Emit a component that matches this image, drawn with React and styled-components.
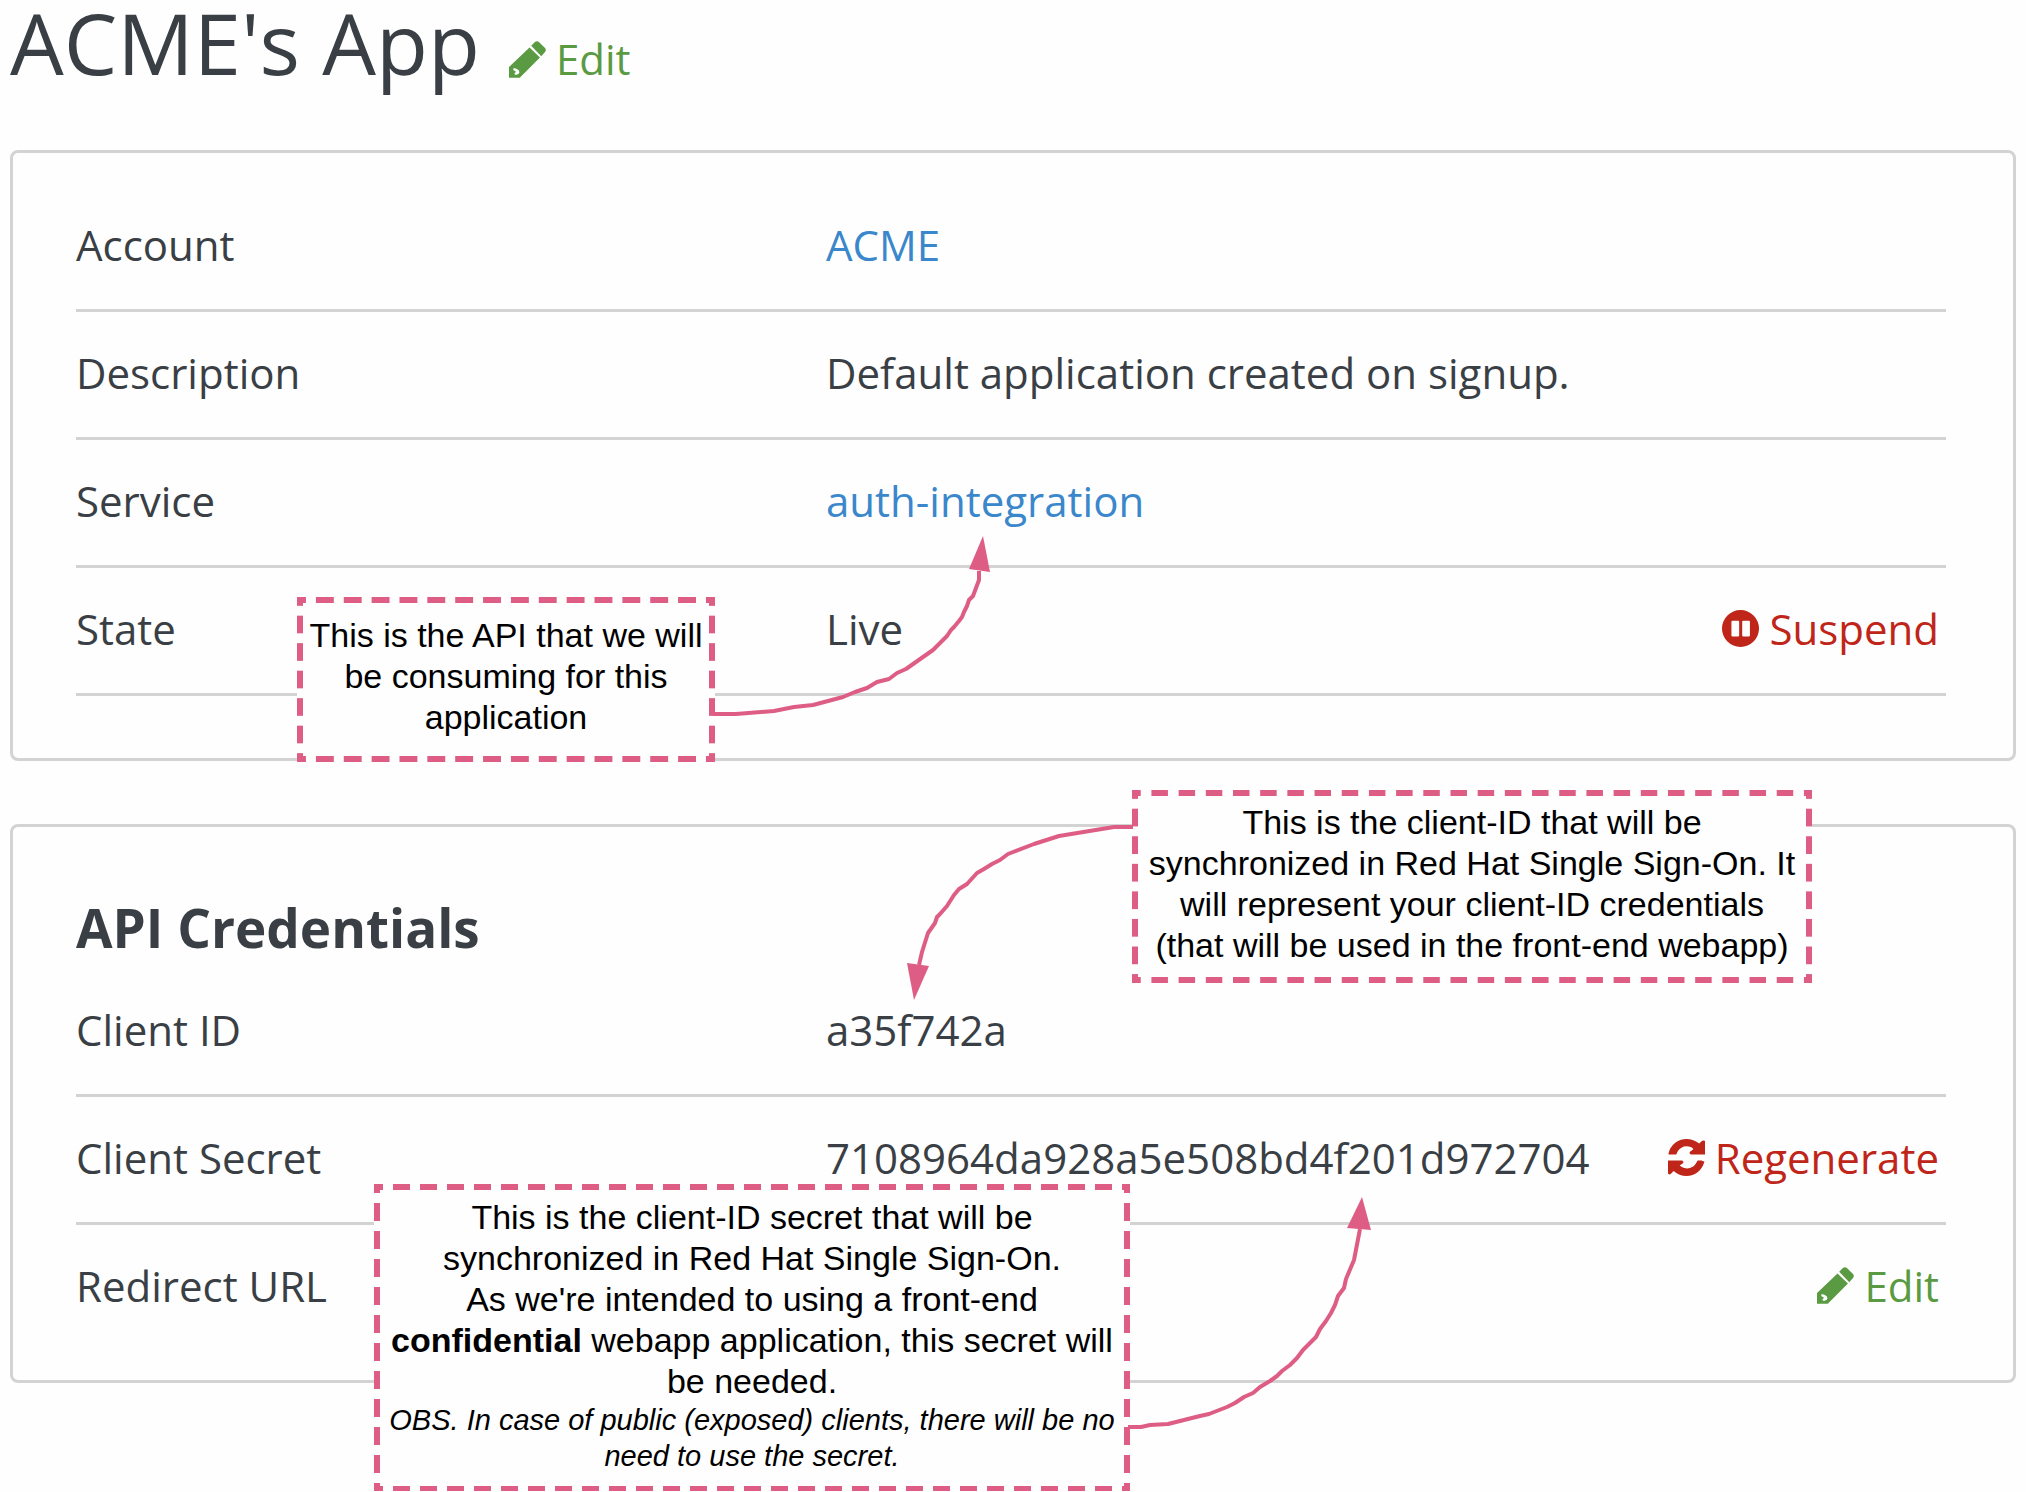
import React from "react";
import styled, { createGlobalStyle } from "styled-components";

const color = {
  text: "#393f44",
  link: "#3a87cb",
  edit: "#5a9a42",
  danger: "#bf2619",
  line: "#d3d3d3",
  note: "#de5d85",
};

const GlobalStyle = createGlobalStyle`
  *, *::before, *::after { box-sizing: border-box; }
  body {
    margin: 0;
    background: #fefefe;
    color: ${color.text};
    font-family: "Open Sans", "Noto Sans", sans-serif;
    font-size: 42px;
    line-height: 60px;
  }
`;

const Page = styled.main`
  position: relative;
  padding: 0 10px 108px;
`;

const Header = styled.header`
  display: flex;
  align-items: baseline;
  gap: 29px;
  margin-bottom: 61px;
`;

const Title = styled.h1`
  margin: 0;
  font-size: 85px;
  line-height: 84px;
  font-weight: 400;
`;

const Card = styled.section`
  border: 3px solid ${color.line};
  border-radius: 8px;
  padding: ${(p) => (p.$titled ? "69px 67px 27px 63px" : "31px 67px 62px 63px")};

  & + & {
    margin-top: 63px;
  }
`;

const CardTitle = styled.h2`
  margin: 0 0 9px;
  font-size: 53px;
  line-height: 64px;
  font-weight: 700;
`;

const Details = styled.dl`
  margin: 0;
`;

const Row = styled.div`
  display: grid;
  grid-template-columns: 40% 1fr auto;
  align-items: center;
  height: 128px;
  padding-bottom: 4px;
  border-bottom: 3px solid ${(p) => (p.$last ? "transparent" : color.line)};
`;

const Term = styled.dt`
  white-space: nowrap;
`;

const Value = styled.dd`
  margin: 0;
  padding-left: 2px;
  white-space: nowrap;
`;

const ActionCell = styled(Value)`
  padding-right: 7px;
`;

const Link = styled.a`
  color: ${color.link};
  text-decoration: none;
`;

const Action = styled.button`
  display: flex;
  align-items: center;
  gap: 10px;
  padding: 0;
  border: 0;
  background: none;
  color: ${(p) => (p.$danger ? color.danger : color.edit)};
  font: inherit;
  text-decoration: none;
  cursor: pointer;
`;

const ActionLabel = styled.span`
  align-self: baseline;
`;

const Icon = styled.svg`
  width: 37px;
  height: 37px;
  fill: currentColor;
`;

const Annotations = styled.aside`
  position: absolute;
  inset: 0;
  pointer-events: none;
`;

const Arrows = styled.svg`
  position: absolute;
  top: 0;
  left: 0;
  overflow: visible;

  polyline {
    fill: none;
    stroke: ${color.note};
    stroke-width: 4;
    stroke-linejoin: round;
  }

  polygon {
    fill: ${color.note};
  }
`;

const dashX = `linear-gradient(90deg, ${color.note} 9px, transparent 9px 19px, ${color.note} 19px)`;
const dashY = `linear-gradient(180deg, ${color.note} 9px, transparent 9px 19px, ${color.note} 19px)`;

const Note = styled.p`
  position: absolute;
  top: ${(p) => p.$top}px;
  left: ${(p) => p.$left}px;
  width: ${(p) => p.$width}px;
  height: ${(p) => p.$height}px;
  display: flex;
  flex-direction: column;
  justify-content: center;
  margin: 0;
  padding-bottom: 6px;
  color: #000;
  font-family: "Liberation Sans", Arial, sans-serif;
  font-size: 34px;
  line-height: 41px;
  text-align: center;
  white-space: nowrap;
  background:
    ${dashX} top left / 27px 6px round no-repeat,
    ${dashX} bottom left / 27px 6px round no-repeat,
    ${dashY} top left / 6px 27px no-repeat round,
    ${dashY} top right / 6px 27px no-repeat round,
    #fefefe;
`;

const Aside = styled.em`
  font-size: 29px;
  line-height: 36px;
`;

const PencilIcon = () => (
  <Icon viewBox="0 0 110 110" aria-hidden="true">
    <path
      fillRule="evenodd"
      d="M0 109V77L61 19L92 49L32 109zM12 82q6-3 11 1q8 3 8 10q0 6-8 7h-5l-2-4l4-3l-1-4l-5-1z"
    />
    <path d="M66 14L77 3q6-5 12 0l18 18q5 6 0 12L96 45z" />
  </Icon>
);

const PauseIcon = () => (
  <Icon viewBox="0 0 110 110" aria-hidden="true">
    <path
      fillRule="evenodd"
      d="M55 0a55 55 0 1 0 0 110a55 55 0 1 0 0-110zM31 32h17q3 0 3 3v41q0 3-3 3H31q-3 0-3-3V35q0-3 3-3zM63 32h17q3 0 3 3v41q0 3-3 3H63q-3 0-3-3V35q0-3 3-3z"
    />
  </Icon>
);

const RefreshIcon = () => (
  <Icon viewBox="0 0 1536 1536" aria-hidden="true">
    <path d="M1511 928q0 5-1 7-64 268-268 434.5T764 1536q-146 0-282.5-55T238 1324l-129 129q-19 19-45 19t-45-19-19-45V896h576q26 0 45 19t19 45-19 45l-137 97q71 66 161 92t155 26q110 0 205-55t153-149q11-17 53-88 8-32 30-32h160q13 0 22.5 9.5t9.5 22.5zM1536 90v550H960q-26 0-45-19t-19-45 19-45l138-108Q969 306 768 306q-114 0-210 55T412 500q-11 17-53 108-8 32-30 32H50q-13 0-22.5-9.5T18 608v-7q65-268 270-434.5T768 0q146 0 284 55.5T1297 182l110-99q19-19 55-19t55 9 19 17z" />
  </Icon>
);

function DetailRow({ term, children, action, last }) {
  return (
    <Row $last={last}>
      <Term>{term}</Term>
      <Value>{children}</Value>
      {action && <ActionCell>{action}</ActionCell>}
    </Row>
  );
}

export default function App() {
  return (
    <>
      <GlobalStyle />
      <Page>
        <Header>
          <Title>ACME's App</Title>
          <Action as="a" href="#edit">
            <PencilIcon />
            <ActionLabel>Edit</ActionLabel>
          </Action>
        </Header>

        <Card>
          <Details>
            <DetailRow term="Account">
              <Link href="#account">ACME</Link>
            </DetailRow>
            <DetailRow term="Description">Default application created on signup.</DetailRow>
            <DetailRow term="Service">
              <Link href="#service">auth-integration</Link>
            </DetailRow>
            <DetailRow
              term="State"
              action={
                <Action type="button" $danger>
                  <PauseIcon />
                  <ActionLabel>Suspend</ActionLabel>
                </Action>
              }
            >
              Live
            </DetailRow>
          </Details>
        </Card>

        <Card $titled>
          <CardTitle>API Credentials</CardTitle>
          <Details>
            <DetailRow term="Client ID">a35f742a</DetailRow>
            <DetailRow
              term="Client Secret"
              action={
                <Action type="button" $danger>
                  <RefreshIcon />
                  <ActionLabel>Regenerate</ActionLabel>
                </Action>
              }
            >
              7108964da928a5e508bd4f201d972704
            </DetailRow>
            <DetailRow
              term="Redirect URL"
              last
              action={
                <Action as="a" href="#redirect-url">
                  <PencilIcon />
                  <ActionLabel>Edit</ActionLabel>
                </Action>
              }
            />
          </Details>
        </Card>

        <Annotations>
          <Note $top={597} $left={297} $width={418} $height={165}>
            <span>This is the API that we will</span>
            <span>be consuming for this</span>
            <span>application</span>
          </Note>
          <Note $top={790} $left={1132} $width={680} $height={193}>
            <span>This is the client-ID that will be</span>
            <span>synchronized in Red Hat Single Sign-On. It</span>
            <span>will represent your client-ID credentials</span>
            <span>(that will be used in the front-end webapp)</span>
          </Note>
          <Note $top={1184} $left={374} $width={756} $height={308}>
            <span>This is the client-ID secret that will be</span>
            <span>synchronized in Red Hat Single Sign-On.</span>
            <span>As we're intended to using a front-end</span>
            <span>
              <strong>confidential</strong> webapp application, this secret will
            </span>
            <span>be needed.</span>
            <Aside>OBS. In case of public (exposed) clients, there will be no</Aside>
            <Aside>need to use the secret.</Aside>
          </Note>
          <Arrows width="1" height="1" aria-hidden="true">
            <polyline points="713,714 736,714 774,711 794,707 813,705 843,697 855,692 867,688 877,682 889,679 897,673 906,669 933,650 947,636 951,630 954,627 959,621 962,617 964,612 967,606 969,600 973,596 979,580 979,571" />
            <polygon points="983,536 969,569 990,572" />
            <polyline points="1133,827 1114,827 1059,836 1034,844 1008,854 1000,860 992,864 984,869 977,873 967,884 959,889 954,895 947,906 940,914 937,917 935,923 928,933 922,952 919,965" />
            <polygon points="914,1000 907,963 929,966" />
            <polyline points="1128,1427 1141,1427 1150,1425 1168,1424 1200,1416 1209,1414 1227,1407 1235,1403 1244,1397 1253,1393 1260,1387 1270,1381 1277,1376 1282,1371 1290,1365 1297,1358 1303,1350 1316,1337 1320,1329 1326,1321 1331,1313 1335,1305 1338,1296 1344,1288 1346,1279 1354,1260 1360,1229" />
            <polygon points="1362,1197 1347,1228 1371,1230" />
          </Arrows>
        </Annotations>
      </Page>
    </>
  );
}
